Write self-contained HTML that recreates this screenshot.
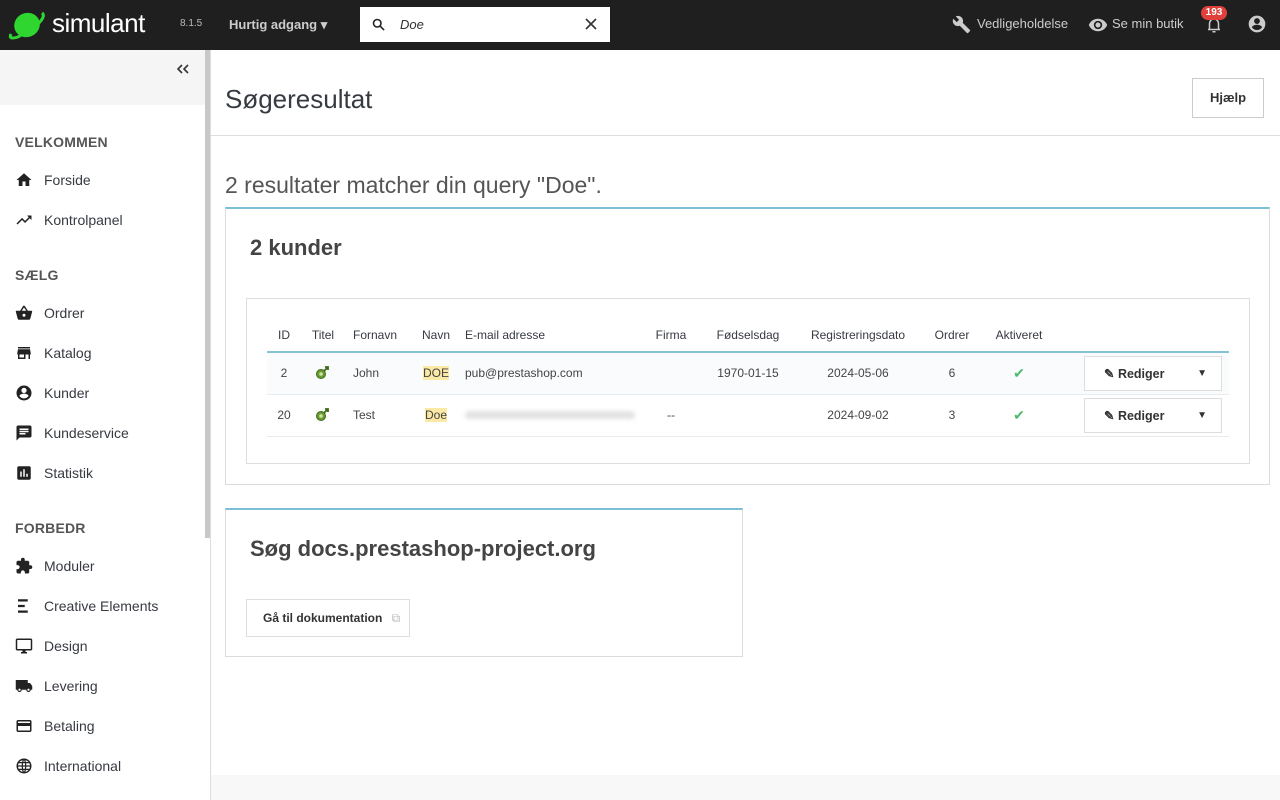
<!DOCTYPE html>
<html><head><meta charset="utf-8"><style>
*{box-sizing:border-box;margin:0;padding:0}
body{width:1280px;height:800px;overflow:hidden;font-family:"Liberation Sans",sans-serif;color:#363a41;background:#fff;position:relative}
.hdr{position:absolute;left:0;top:0;width:1280px;height:50px;background:#1f1f1f;color:#ddd}
.abs{position:absolute}
.side{position:absolute;left:0;top:50px;width:211px;height:750px;background:#fff;border-right:1px solid #ddd}
.sec{position:absolute;left:15px;font-size:14px;font-weight:bold;color:#555;letter-spacing:.2px}
.it{position:absolute;left:15px;font-size:14px;color:#363a41;display:flex;align-items:center}
.it svg{width:18px;height:18px;margin-right:11px;fill:#222}
.card{position:absolute;border:1px solid #dcdcdc;border-top:2px solid #7cc0d8;background:#fff}
table{border-collapse:collapse;font-size:12px}
th{font-weight:normal;color:#363a41;height:34px;border-bottom:2px solid #86c2d6;text-align:center}
td{height:42px;border-bottom:1px solid #e8ecef;text-align:center;color:#444}
.hl{background:#fbe9a6}
.btn{display:inline-flex;align-items:center;border:1px solid #ddd;height:35px;width:138px;font-size:12.5px;font-weight:bold;color:#333;padding-left:19px;background:#fff}
</style></head><body>
<div class="hdr">
 <svg class="abs" style="left:8px;top:10px" width="38" height="30" viewBox="0 0 38 30"><ellipse cx="19" cy="15" rx="13" ry="12" fill="#2fd62f" transform="rotate(-25 19 15)"/><path d="M3 24 Q0 30 10 27 L30 14 Q38 6 34 3" stroke="#2fd62f" stroke-width="3" fill="none"/></svg>
 <div class="abs" style="left:52px;top:8px;font-size:26px;color:#fff;letter-spacing:-.5px">simulant</div>
 <div class="abs" style="left:180px;top:18px;font-size:10px;color:#bbb">8.1.5</div>
 <div class="abs" style="left:229px;top:17px;font-size:13px;font-weight:bold;color:#ccc">Hurtig adgang ▾</div>
 <div class="abs" style="left:360px;top:7px;width:250px;height:35px;background:#fff">
  <svg class="abs" style="left:11px;top:10px" width="15" height="15" viewBox="0 0 24 24"><circle cx="10" cy="10" r="6" stroke="#222" stroke-width="2.5" fill="none"/><path d="M14.5 14.5L21 21" stroke="#222" stroke-width="2.5"/></svg>
  <div class="abs" style="left:40px;top:10px;font-size:13px;font-style:italic;color:#333">Doe</div>
  <svg class="abs" style="left:225px;top:11px" width="12" height="12" viewBox="0 0 12 12"><path d="M1 1L11 11M11 1L1 11" stroke="#333" stroke-width="1.6"/></svg>
 </div>
 <svg class="abs" style="left:952px;top:15px" width="19" height="19" viewBox="0 0 24 24"><path fill="#ccc" d="M22.7 19l-9.1-9.1c.9-2.3.4-5-1.5-6.9-2-2-5-2.4-7.4-1.3L9 6 6 9 1.6 4.7C.4 7.1.9 10.1 2.9 12.1c1.9 1.9 4.6 2.4 6.9 1.5l9.1 9.1c.4.4 1 .4 1.4 0l2.3-2.3c.5-.4.5-1.1.1-1.4z"/></svg>
 <div class="abs" style="left:977px;top:16px;font-size:13px;color:#ccc">Vedligeholdelse</div>
 <svg class="abs" style="left:1088px;top:15px" width="20" height="20" viewBox="0 0 24 24"><path fill="#ccc" d="M12 4.5C7 4.5 2.7 7.6 1 12c1.7 4.4 6 7.5 11 7.5s9.3-3.1 11-7.5c-1.7-4.4-6-7.5-11-7.5zM12 17a5 5 0 110-10 5 5 0 010 10zm0-8a3 3 0 100 6 3 3 0 000-6z"/></svg>
 <div class="abs" style="left:1112px;top:16px;font-size:13px;color:#ccc">Se min butik</div>
 <svg class="abs" style="left:1205px;top:16px" width="18" height="18" viewBox="0 0 24 24"><path fill="none" stroke="#ccc" stroke-width="2" d="M6 18V10a6 6 0 0112 0v8M4 18h16M10 21h4"/></svg>
 <div class="abs" style="left:1201px;top:6px;width:26px;height:14px;background:#e0403c;border-radius:7px;color:#fff;font-size:10px;text-align:center;line-height:14px;font-weight:bold">193</div>
 <svg class="abs" style="left:1247px;top:14px" width="20" height="20" viewBox="0 0 24 24"><path fill="#ccc" d="M12 2a10 10 0 100 20 10 10 0 000-20zm0 3a3.5 3.5 0 110 7 3.5 3.5 0 010-7zm0 14.2a7.2 7.2 0 01-6-3.2c0-2 4-3.1 6-3.1s6 1.1 6 3.1a7.2 7.2 0 01-6 3.2z"/></svg>
</div>
<div class="side">
 <div class="abs" style="left:0;top:0;width:205px;height:55px;background:#f5f5f5"></div>
 <svg class="abs" style="left:177px;top:14px" width="12" height="10" viewBox="0 0 12 10"><path d="M5 1L1 5l4 4M11 1L7 5l4 4" stroke="#333" stroke-width="1.6" fill="none"/></svg>
 <div class="abs" style="left:205px;top:0;width:5px;height:488px;background:#c8c8c8"></div>
 <div class="sec" style="top:84px">VELKOMMEN</div>
 <div class="it" style="top:121px"><svg viewBox="0 0 24 24"><path d="M10 20v-6h4v6h5v-8h3L12 3 2 12h3v8z"/></svg>Forside</div>
 <div class="it" style="top:161px"><svg viewBox="0 0 24 24"><path d="M16 6l2.3 2.3-4.9 4.9-4-4L2 16.6 3.4 18l6-6 4 4 6.3-6.3L22 12V6z"/></svg>Kontrolpanel</div>
 <div class="sec" style="top:217px">SÆLG</div>
 <div class="it" style="top:254px"><svg viewBox="0 0 24 24"><path d="M17.2 9l-4.4-6.6c-.4-.6-1.300-.6-1.7 0L6.8 9H2c-.6 0-1 .4-1 1l.1.3 2.5 9.3c.2.8 1 1.4 1.9 1.4h13c.9 0 1.7-.6 1.9-1.5l2.5-9.3V10c0-.6-.4-1-1-1h-4.7zM9 9l3-4.4L15 9H9zm3 8a2 2 0 110-4 2 2 0 010 4z"/></svg>Ordrer</div>
 <div class="it" style="top:294px"><svg viewBox="0 0 24 24"><path d="M20 4H4v2h16V4zm1 10v-2l-1-5H4l-1 5v2h1v6h10v-6h4v6h2v-6h1zm-9 4H6v-4h6v4z"/></svg>Katalog</div>
 <div class="it" style="top:334px"><svg viewBox="0 0 24 24"><path d="M12 2a10 10 0 100 20 10 10 0 000-20zm0 3a3.5 3.5 0 110 7 3.5 3.5 0 010-7zm0 14.2a7.2 7.2 0 01-6-3.2c0-2 4-3.1 6-3.1s6 1.1 6 3.1a7.2 7.2 0 01-6 3.2z"/></svg>Kunder</div>
 <div class="it" style="top:374px"><svg viewBox="0 0 24 24"><path d="M20 2H4c-1.1 0-2 .9-2 2v18l4-4h14c1.1 0 2-.9 2-2V4c0-1.1-.9-2-2-2zM6 9h12v2H6V9zm8 5H6v-2h8v2zm4-6H6V6h12v2z"/></svg>Kundeservice</div>
 <div class="it" style="top:414px"><svg viewBox="0 0 24 24"><path d="M19 3H5c-1.1 0-2 .9-2 2v14c0 1.1.9 2 2 2h14c1.1 0 2-.9 2-2V5c0-1.1-.9-2-2-2zM9 17H7v-7h2v7zm4 0h-2V7h2v10zm4 0h-2v-4h2v4z"/></svg>Statistik</div>
 <div class="sec" style="top:470px">FORBEDR</div>
 <div class="it" style="top:507px"><svg viewBox="0 0 24 24"><path d="M20.5 11H19V7c0-1.1-.9-2-2-2h-4V3.5a2.5 2.5 0 00-5 0V5H4c-1.1 0-2 .9-2 2v3.8h1.5c1.5 0 2.7 1.2 2.7 2.7S5 16.2 3.5 16.2H2V20c0 1.1.9 2 2 2h3.8v-1.5c0-1.5 1.2-2.7 2.7-2.7s2.7 1.2 2.7 2.7V22H17c1.1 0 2-.9 2-2v-4h1.5a2.5 2.5 0 000-5z"/></svg>Moduler</div>
 <div class="it" style="top:547px"><svg viewBox="0 0 24 24"><path d="M4 3h13v3H4zM4 10.5h9v3H4zM4 18h13v3H4z"/></svg>Creative Elements</div>
 <div class="it" style="top:587px"><svg viewBox="0 0 24 24"><path d="M21 2H3c-1.1 0-2 .9-2 2v12c0 1.1.9 2 2 2h7v2H8v2h8v-2h-2v-2h7c1.1 0 2-.9 2-2V4c0-1.1-.9-2-2-2zm0 14H3V4h18v12z"/></svg>Design</div>
 <div class="it" style="top:627px"><svg viewBox="0 0 24 24"><path d="M20 8h-3V4H1v13h2a3 3 0 006 0h6a3 3 0 006 0h2v-5l-3-4zM6 18.5a1.5 1.5 0 110-3 1.5 1.5 0 010 3zm12 0a1.5 1.5 0 110-3 1.5 1.5 0 010 3z"/></svg>Levering</div>
 <div class="it" style="top:667px"><svg viewBox="0 0 24 24"><path d="M20 4H4c-1.1 0-2 .9-2 2v12c0 1.1.9 2 2 2h16c1.1 0 2-.9 2-2V6c0-1.1-.9-2-2-2zm0 14H4v-6h16v6zm0-10H4V6h16v2z"/></svg>Betaling</div>
 <div class="it" style="top:707px"><svg viewBox="0 0 24 24"><circle cx="12" cy="12" r="9" fill="none" stroke="#222" stroke-width="2"/><path d="M3 12h18M12 3c-3 3-3 15 0 18M12 3c3 3 3 15 0 18M5 7.5h14M5 16.5h14" fill="none" stroke="#222" stroke-width="1.6"/></svg>International</div>
</div>
<div class="abs" style="left:211px;top:135px;width:1069px;height:1px;background:#ddd"></div>
<div class="abs" style="left:211px;top:775px;width:1069px;height:25px;background:#f8f8f8"></div>
<div class="abs" style="left:225px;top:84px;font-size:26px;color:#363a41">Søgeresultat</div>
<div class="abs" style="left:1192px;top:78px;width:72px;height:40px;border:1px solid #ccc;font-size:13px;font-weight:bold;text-align:center;line-height:38px;color:#333">Hjælp</div>
<div class="abs" style="left:225px;top:172px;font-size:23px;color:#555">2 resultater matcher din query "Doe".</div>
<div class="card" style="left:225px;top:207px;width:1045px;height:278px">
 <div class="abs" style="left:24px;top:26px;font-size:22px;font-weight:bold;color:#444">2 kunder</div>
 <div class="abs" style="left:20px;top:89px;width:1004px;height:166px;border:1px solid #ddd">
  <table class="abs" style="left:20px;top:19px;width:962px">
   <tr><th style="width:34px">ID</th><th style="width:44px">Titel</th><th style="width:66px;text-align:left;padding-left:8px">Fornavn</th><th style="width:50px">Navn</th><th style="width:182px;text-align:left;padding-left:4px">E-mail adresse</th><th style="width:56px">Firma</th><th style="width:98px">Fødselsdag</th><th style="width:122px">Registreringsdato</th><th style="width:66px">Ordrer</th><th style="width:68px">Aktiveret</th><th style="padding-right:7px"></th></tr>
   <tr style="background:#fafbfc"><td>2</td><td><svg width="16" height="16" viewBox="0 0 16 16"><circle cx="6" cy="10" r="4.5" fill="#6b9a34" stroke="#3f6a1a"/><circle cx="6" cy="10" r="1.8" fill="#cfe3a8"/><path d="M9 7l4-4M10 3h3v3" stroke="#3f6a1a" stroke-width="1.8" fill="none"/></svg></td><td style="text-align:left;padding-left:8px">John</td><td><span class="hl">DOE</span></td><td style="text-align:left;padding-left:4px">pub@prestashop.com</td><td></td><td>1970-01-15</td><td>2024-05-06</td><td>6</td><td style="color:#4cbb6c;font-size:14px">✔</td><td style="text-align:right;padding-right:7px"><span class="btn">✎&nbsp;Rediger<span style="margin-left:auto;margin-right:14px;font-size:10px">▼</span></span></td></tr>
   <tr><td>20</td><td><svg width="16" height="16" viewBox="0 0 16 16"><circle cx="6" cy="10" r="4.5" fill="#6b9a34" stroke="#3f6a1a"/><circle cx="6" cy="10" r="1.8" fill="#cfe3a8"/><path d="M9 7l4-4M10 3h3v3" stroke="#3f6a1a" stroke-width="1.8" fill="none"/></svg></td><td style="text-align:left;padding-left:8px">Test</td><td><span class="hl">Doe</span></td><td style="text-align:left;padding-left:4px"><span style="display:inline-block;width:170px;height:8px;background:#e2e2e2;border-radius:4px;filter:blur(2px)"></span></td><td>--</td><td></td><td>2024-09-02</td><td>3</td><td style="color:#4cbb6c;font-size:14px">✔</td><td style="text-align:right;padding-right:7px"><span class="btn">✎&nbsp;Rediger<span style="margin-left:auto;margin-right:14px;font-size:10px">▼</span></span></td></tr>
  </table>
 </div>
</div>
<div class="card" style="left:225px;top:508px;width:518px;height:149px">
 <div class="abs" style="left:24px;top:26px;font-size:22px;font-weight:bold;color:#444">Søg docs.prestashop-project.org</div>
 <div class="abs" style="left:20px;top:89px;width:164px;height:38px;border:1px solid #ddd;font-size:12px;font-weight:bold;line-height:36px;padding-left:16px;color:#333">Gå til dokumentation <span style="color:#bbb;font-weight:normal;margin-left:6px">⧉</span></div>
</div>
</body></html>
